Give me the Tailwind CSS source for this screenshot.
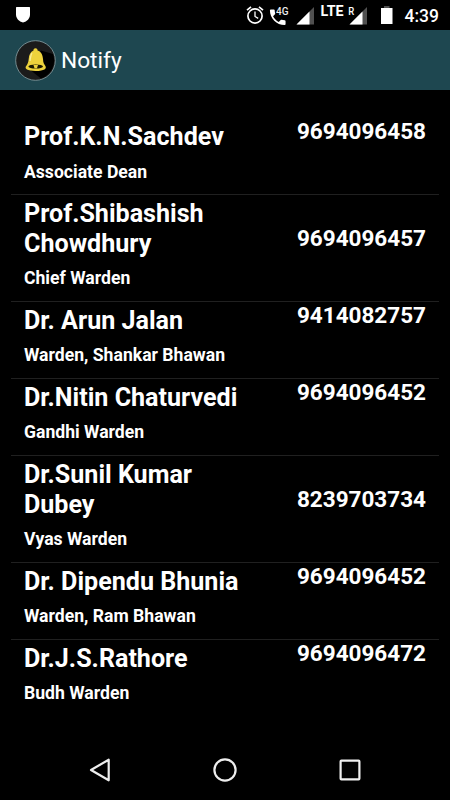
<html lang="en">
 <head>
  <meta charset="utf-8"/>
  <meta content="width=device-width, initial-scale=1.0" name="viewport"/>
  <title>
    Notify
  </title>
  <script src="https://cdn.jsdelivr.net/npm/@tailwindcss/browser@4"></script>
 </head>
 <body class="bg-black text-white font-['Roboto',sans-serif] h-screen flex flex-col overflow-hidden">
  <!-- Status bar -->
  <div class="h-[30px] shrink-0 flex items-center justify-between pl-4 pr-[11px]">
   <svg class="w-[14px] h-4" viewBox="0 0 14 16" fill="#fff">
    <path d="M0 0.5Q0 0 .5 0H13.5Q14 0 14 .5V7.5C14 11.5 11 14.5 7 15.6C3 14.5 0 11.5 0 7.5Z"/>
   </svg>
   <div class="flex items-center">
    <svg class="w-[159px] h-[30px]" viewBox="245 0 159 30">
     <g fill="none" stroke="#fff">
      <circle cx="255" cy="16" r="7.1" stroke-width="1.7"/>
      <path d="M255 11.5V16.5L258.2 18.4" stroke-width="1.3"/>
      <path d="M247 10.2L251 6.9M263 10.2L259 6.9" stroke-width="1.7"/>
     </g>
     <path transform="translate(267.3 6.8) scale(.87)" fill="#fff" d="M20 15.5c-1.25 0-2.45-.2-3.57-.57-.35-.11-.74-.03-1.02.24l-2.2 2.2c-2.83-1.44-5.15-3.75-6.59-6.59l2.2-2.21c.28-.26.36-.65.25-1C8.7 6.45 8.5 5.25 8.5 4c0-.55-.45-1-1-1H4c-.55 0-1 .45-1 1 0 9.39 7.61 17 17 17 .55 0 1-.45 1-1v-3.5c0-.55-.45-1-1-1z"/>
     <text x="276" y="15.3" fill="#eee" font-size="10.8" font-weight="500" textLength="12.5" lengthAdjust="spacingAndGlyphs">4G</text>
     <path d="M314 7V24.5H296.5Z" fill="#505050"/>
     <path d="M309.5 11.5V24.5H296.5Z" fill="#fff"/>
     <text x="320.5" y="16" fill="#fff" font-size="13.8" font-weight="700" textLength="23" lengthAdjust="spacingAndGlyphs">LTE</text>
     <text x="348.3" y="15.2" fill="#fff" font-size="11" font-weight="500" textLength="6" lengthAdjust="spacingAndGlyphs">R</text>
     <path d="M367 7V24.5H349.5Z" fill="#505050"/>
     <path d="M362.5 11.5V24.5H349.5Z" fill="#fff"/>
     <path d="M384 6H389.5V8H384Z" fill="#505050"/>
     <path d="M381 8H392.5V24H381Z" fill="#fff"/>
    </svg>
    <span class="w-[35px] pt-[3px] text-[17.5px] leading-none font-medium whitespace-nowrap flex justify-end">4:39</span>
   </div>
  </div>

  <!-- App bar -->
  <header class="h-[60px] shrink-0 bg-[#1e4750] flex items-center pl-[15px]">
   <svg class="w-[41px] h-[41px] mr-[5px]" viewBox="0 0 41 41">
    <circle cx="20.5" cy="20.5" r="19.8" fill="#1b1b1b" stroke="#8ba1a5" stroke-width=".8"/>
    <path d="M26 10.5L38 14A19 19 0 0 1 26 38.5L14 29Z" fill="#000"/>
    <path d="M20.5 8.2C22 8.2 22.7 9.2 22.5 10.5C26.5 11.8 27.7 15 28 19C28.2 22.8 29 24 30.4 26C32 28.5 29.5 31 20.7 31C12 31 9.5 28.5 11 26.3C12.3 24.5 13.5 22.5 13.7 19C14 14.8 15.5 11.8 18.5 10.5C18.3 9.2 19 8.2 20.5 8.2Z" fill="#edd23c"/>
    <path d="M17 13C15.5 15 15.5 18 15 21" fill="none" stroke="#f8eda0" stroke-width="1.2"/>
    <ellipse cx="20.7" cy="26.5" rx="7.3" ry="2.1" fill="#1b1903"/>
    <path d="M18.5 25H23L22 28.2H19.5Z" fill="#edd23c"/>
   </svg>
   <h1 class="pt-[2px] text-[22.7px] leading-none">
    Notify
   </h1>
  </header>

  <!-- Contacts -->
  <main class="flex-1 min-h-0 pt-[28px] px-[11px]">
   <ul id="contact-list" class="divide-y divide-[#202020]"></ul>
  </main>

  <!-- Navigation bar -->
  <nav class="h-[60px] shrink-0 flex items-center justify-between px-[87px]">
   <svg class="w-[26px] h-[26px]" viewBox="0 0 26 26" fill="none" stroke="#eee" stroke-width="2.2" stroke-linejoin="round">
    <path d="M21.7 2.7V23.3L4 13Z"/>
   </svg>
   <svg class="w-[26px] h-[26px]" viewBox="0 0 26 26" fill="none" stroke="#eee" stroke-width="2.2">
    <circle cx="13" cy="13" r="10.6"/>
   </svg>
   <svg class="w-[26px] h-[26px]" viewBox="0 0 26 26" fill="none" stroke="#eee" stroke-width="2.2">
    <rect x="3.6" y="3.6" width="18.8" height="18.8" rx=".8"/>
   </svg>
  </nav>

  <script>
    const contacts = [
      { name: 'Prof.K.N.Sachdev', role: 'Associate Dean', phone: '9694096458' },
      { name: 'Prof.Shibashish Chowdhury', role: 'Chief Warden', phone: '9694096457' },
      { name: 'Dr. Arun Jalan', role: 'Warden, Shankar Bhawan', phone: '9414082757' },
      { name: 'Dr.Nitin Chaturvedi', role: 'Gandhi Warden', phone: '9694096452' },
      { name: 'Dr.Sunil Kumar Dubey', role: 'Vyas Warden', phone: '8239703734' },
      { name: 'Dr. Dipendu Bhunia', role: 'Warden, Ram Bhawan', phone: '9694096452' },
      { name: 'Dr.J.S.Rathore', role: 'Budh Warden', phone: '9694096472' }
    ];

    const list = document.getElementById('contact-list');
    contacts.forEach(contact => {
      list.innerHTML += `
        <li class="pt-[4px] pb-[11.5px] px-[13px]">
          <div class="flex items-end justify-between">
            <h2 class="w-[225px] text-[25.1px] leading-[29.6px] font-bold">${contact.name}</h2>
            <span class="mb-[10.4px] text-[22.5px] leading-[19px] font-bold">${contact.phone}</span>
          </div>
          <p class="mt-[10px] text-[17.6px] leading-[21px] font-bold">${contact.role}</p>
        </li>
      `;
    });
  </script>
 </body>
</html>
